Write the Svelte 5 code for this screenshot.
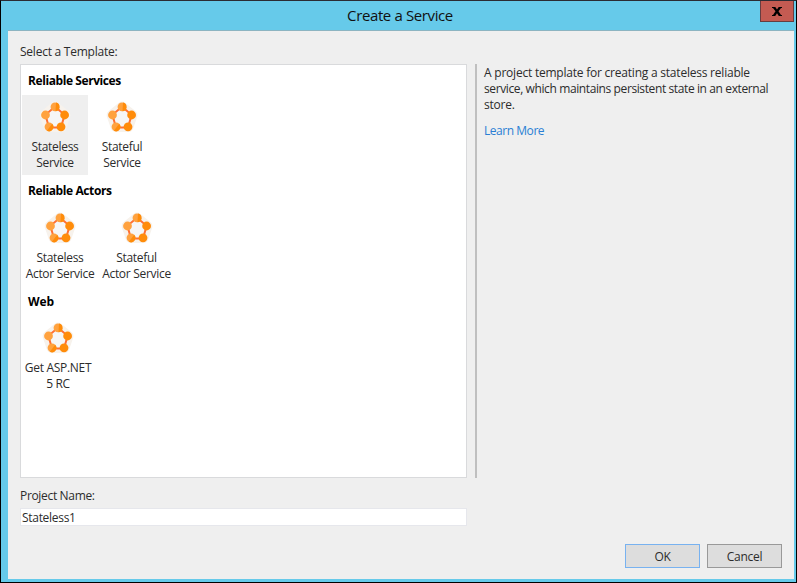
<script>
  const groups = [
    { title: 'Reliable Services', spacing: -0.42, items: [
      { lines: ['Stateless', 'Service'], width: 66, selected: true },
      { lines: ['Stateful', 'Service'], width: 68 }
    ] },
    { title: 'Reliable Actors', spacing: -0.4, items: [
      { lines: ['Stateless', 'Actor Service'], width: 76 },
      { lines: ['Stateful', 'Actor Service'], width: 77 }
    ] },
    { title: 'Web', spacing: -0.1, items: [{ lines: ['Get ASP.NET', '5 RC'], width: 72 }] }
  ];
  let name = $state('Stateless1');
</script>

{#snippet ringIcon()}
  <svg class="icon" width="32" height="32" viewBox="0 0 32 32">
    <polygon class="halo" points="16,6.2 25.9,14.3 22,25.6 10,25.6 6.2,14.3" />
    <polygon class="ring" points="16,5.8 25.6,13.8 22,26.5 10,26.5 6.4,13.8" />
    <g fill="#ffa23f">
      <circle cx="16" cy="5.9" r="4.4" /><circle cx="6.5" cy="14" r="4.4" /><circle cx="10" cy="25.8" r="4.4" />
    </g>
    <g fill="#ff8c0a">
      <path d="M17 1.6a4.4 4.4 0 0 1 -0.5 8.7z" />
      <path d="M13.2 22.8a4.4 4.4 0 0 1 -5.3 6.9z" />
      <circle cx="25.6" cy="14" r="4.4" /><circle cx="22" cy="25.8" r="4.4" />
    </g>
  </svg>
{/snippet}

<div class="window">
  <header>
    <h1>Create a Service</h1>
    <button class="close" aria-label="Close">
      <svg width="10" height="9" viewBox="0 0 10 9"><path d="M0 0h3.3L5 2.6 6.7 0H10v1H9L6.5 4.3 9 8h1v1H6.8L5 6.3 3.2 9H0V8h1l2.5-3.7L1 1H0z" /></svg>
    </button>
  </header>
  <main>
    <div class="top">
      <section class="left">
        <div class="label first">Select a Template:</div>
        <div class="list">
          {#each groups as group}
            <div class="group">
              <h2 style:letter-spacing="{group.spacing}px">{group.title}</h2>
              <div class="items">
                {#each group.items as item}
                  <div class="item" class:selected={item.selected} style:width="{item.width}px">
                    {@render ringIcon()}
                    {#each item.lines as line}<span>{line}</span>{/each}
                  </div>
                {/each}
              </div>
            </div>
          {/each}
        </div>
      </section>
      <aside>
        <p>A project template for creating a stateless reliable<br /><span class="tight">service, which maintains persistent state in an external</span><br />store.</p>
        <span class="link">Learn More</span>
      </aside>
    </div>
    <label class="label" for="name">Project Name:</label>
    <input id="name" bind:value={name} spellcheck="false" />
    <footer>
      <button class="btn primary">OK</button>
      <button class="btn">Cancel</button>
    </footer>
  </main>
</div>

<style>
  .window {
    box-sizing: border-box;
    width: 797px;
    height: 583px;
    display: flex;
    flex-direction: column;
    padding: 0 2px 3px 7px;
    border: 1px solid #000;
    border-top-color: #2b2b33;
    background: #66caea;
    color: #2c2c2c;
    font: 12px/16px 'Open Sans', 'Noto Sans', sans-serif;
    letter-spacing: -0.3px;
  }
  header { position: relative; height: 29px; flex: none; }
  h1 { margin: 0; font-size: 15px; line-height: 28px; font-weight: 400; letter-spacing: -0.38px; text-align: center; text-indent: -2px; color: #111; }
  .close {
    position: absolute; top: 0; right: 0; width: 34px; height: 21px; padding: 0;
    display: flex; align-items: center; justify-content: center;
    background: #c45b52; border: 1px solid #673d40; border-top: 0;
  }
  main { flex: 1; box-sizing: border-box; border-top: 1px solid #8cb4c1; background: #efefef; padding: 13px 12px 0; }
  .top { display: flex; height: 434px; gap: 8px; }
  .left { flex: none; width: 447px; display: flex; flex-direction: column; }
  .label { display: block; height: 20px; letter-spacing: -0.33px; }
  .first { letter-spacing: -0.24px; }
  .list { flex: 1; box-sizing: border-box; background: #fff; border: 1px solid #d9dadc; padding: 8px 1px 0; }
  h2 { margin: 0 0 6px 6px; font-size: 12px; line-height: 16px; font-weight: 700; color: #000; }
  .group { height: 110.4px; }
  .items { display: flex; }
  .item { height: 80px; display: flex; flex-direction: column; align-items: center; white-space: nowrap; }
  .item.selected { background: #efefef; }
  .icon { margin: 6px 0 6px; flex: none; }
  .halo { fill: #f4f4f4; stroke: #f7f2ec; stroke-width: 11; stroke-linejoin: round; }
  .group:nth-child(2) .icon { margin: 6.6px 0 5.6px; }
  .ring { fill: #f6f6f6; stroke: #ff7033; stroke-width: 2; }
  aside { margin-top: 20px; border-left: 2px solid #bfbfbf; padding: 1px 0 0 7px; flex: 1; white-space: nowrap; letter-spacing: -0.22px; }
  p { margin: 0 0 10px; }
  .tight { letter-spacing: -0.39px; }
  .link { color: #2a7fd4; letter-spacing: -0.46px; }
  main > .label { margin-top: 10px; }
  input {
    display: block; box-sizing: border-box; width: 447px; height: 18px; padding: 0 1px; margin: 0;
    background: #fff; border: 1px solid #e6e7ec; color: #2c2c2c; font: inherit; letter-spacing: -0.3px; outline: 0;
  }
  footer { display: flex; justify-content: flex-end; gap: 7px; margin-top: 18px; }
  .btn { width: 75px; height: 24px; padding: 2px 0 0; background: #ddd; border: 1px solid #999; font: inherit; letter-spacing: -0.3px; color: #2c2c2c; }
  .primary { border-color: #78b2f0; }
</style>
